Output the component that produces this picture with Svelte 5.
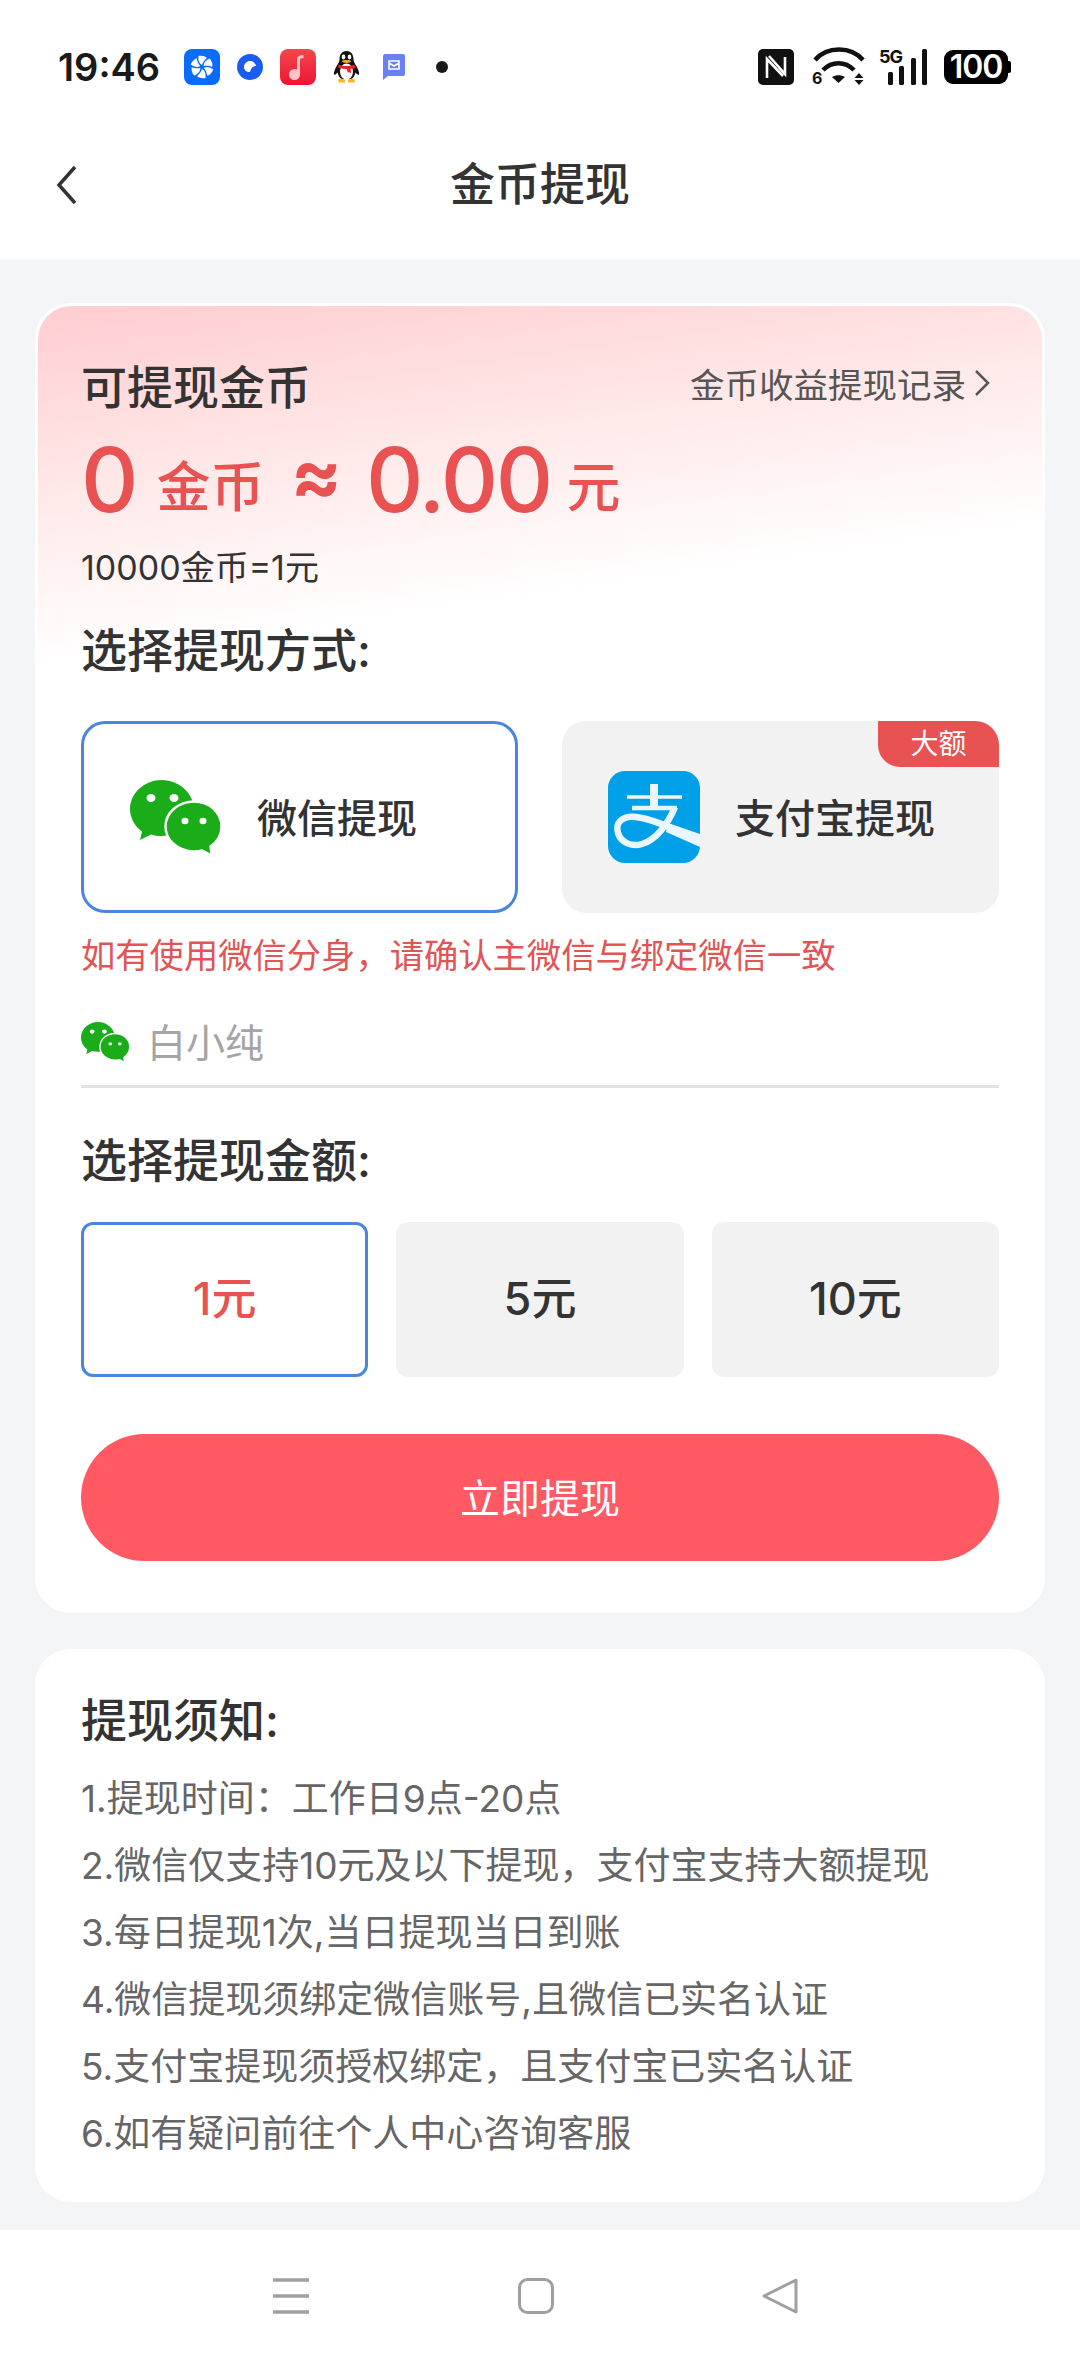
<script lang="ts">
  const FONT_NOTICE = [
    '1.提现时间：工作日9点-20点',
    '2.微信仅支持10元及以下提现，支付宝支持大额提现',
    '3.每日提现1次,当日提现当日到账',
    '4.微信提现须绑定微信账号,且微信已实名认证',
    '5.支付宝提现须授权绑定，且支付宝已实名认证',
    '6.如有疑问前往个人中心咨询客服',
  ];
  const AMOUNTS = ['1元', '5元', '10元'];
  const PETAL = 'M18 16c-3-1.500-4-5-3.500-9 3-.5 6.500 0 8.500 2-2 1.500-4 4-5 7z';
  let selected = $state('1元');
  let method = $state('wechat');
</script>

{#snippet wechat(w, h)}
  <svg width={w} height={h} viewBox="0 0 92 75">
    <path fill="#1aad19" d="M32 0C14.500 0 0 13 0 29c0 9 4.500 17 12 22.500L10 60l11-5.500c3.500 1 7 1.500 11 1.500 17.500 0 32-12 32-27S49.500 0 32 0z" />
    <path fill="#1aad19" stroke="#fff" stroke-width="2.500" d="M64 21.500c-15.500 0-28.500 11-28.500 25s13 25 28.500 25c3 0 5.500-.3 8-1l10 5-1.500-9c7-4.600 11-12 11-20 0-14-12-25-27.500-25z" />
    <ellipse cx="21" cy="18" rx="4.500" ry="4" fill="#fff" />
    <ellipse cx="44" cy="18" rx="4.500" ry="4" fill="#fff" />
    <ellipse cx="55" cy="41" rx="3.500" ry="3.200" fill="#fff" />
    <ellipse cx="73" cy="41" rx="3.500" ry="3.200" fill="#fff" />
  </svg>
{/snippet}

<div class="page">
  <div class="status">
    <span class="time">19:46</span>
    <div class="notifs">
      <span class="slot">
        <svg width="36" height="36" viewBox="0 0 36 36">
          <rect width="36" height="36" rx="8" fill="#0a6cff" />
          <g fill="#fff">
            {#each [0, 60, 120, 180, 240, 300] as deg (deg)}
              <path d={PETAL} transform="rotate({deg} 18 18)" />
            {/each}
          </g>
        </svg>
      </span>
      <span class="slot">
        <svg width="26" height="26" viewBox="0 0 26 26">
          <circle cx="13" cy="13" r="13" fill="#1a5cf0" />
          <path fill="#fff" d="M7 13c0-3.500 2.800-6 6-6 3 0 5.500 2 6 5-2.500 0-5 1.800-5.500 4.500-.2.700-.5 1.500-1 1.500C9.500 18 7 16 7 13z" />
        </svg>
      </span>
      <span class="slot">
        <svg width="36" height="36" viewBox="0 0 36 36">
          <defs>
            <linearGradient id="musicBg" x1="0" y1="0" x2="0" y2="1">
              <stop offset="0" stop-color="#f2484c" />
              <stop offset="1" stop-color="#f01434" />
            </linearGradient>
          </defs>
          <rect width="36" height="36" rx="8" fill="url(#musicBg)" />
          <path fill="none" stroke="#ffc4c8" stroke-width="3" d="M18.500 26V10.500c0-2 1.500-3 5-3" />
          <circle cx="14.500" cy="25.500" r="5.500" fill="#ffc4c8" />
        </svg>
      </span>
      <span class="slot">
        <svg width="27" height="32" viewBox="0 0 27 32">
          <path fill="#111" d="M13.500 0C8.500 0 6.500 4 6.500 8.500c0 2-1 3.500-2.500 6C2 18 .5 21 1 23.500c1 .8 2.500-1 3.500-2 1 3 2 5.500 4 6.500h10c2-1 3-3.500 4-6.500 1 1 2.500 2.800 3.500 2 .5-2.500-1-5.500-3-9-1.500-2.500-2.500-4-2.500-6C20.500 4 18.500 0 13.500 0z" />
          <ellipse cx="13.500" cy="20.500" rx="6.500" ry="8" fill="#fff" />
          <ellipse cx="10.500" cy="6" rx="1.800" ry="2.400" fill="#fff" />
          <ellipse cx="16.500" cy="6" rx="1.800" ry="2.400" fill="#fff" />
          <path fill="#f8a81c" d="M8.500 10c2-1.500 8-1.500 10 0-1.500 2.500-8.500 2.500-10 0z" />
          <path fill="#e8262a" d="M5.500 13.500c4 2 12 2 16 0l1 3c-1.500.8-3 1.200-5 1.500l.5 4-3.500-1-.5-3c-3 0-6-.5-9-1.500z" />
          <path fill="#f8b82c" d="M5 29c2-2 5-1.500 7 0v2.500H5.500zM15 29c2-1.500 5-2 7 0l-.5 2.500H15z" />
        </svg>
      </span>
      <span class="slot">
        <svg width="22" height="26" viewBox="0 0 22 26">
          <path fill="#6a80f5" d="M2 0h18a2 2 0 0 1 2 2v18a2 2 0 0 1-2 2H5l-5 4V2a2 2 0 0 1 2-2z" />
          <path fill="none" stroke="#fff" stroke-width="1.600" d="M6 7h10v8H6zM6 9l5 3 5-3" />
        </svg>
      </span>
      <span class="slot"><i class="dot"></i></span>
    </div>
    <div class="sys">
      <svg width="36" height="36" viewBox="0 0 36 36">
        <rect width="36" height="36" rx="5" fill="#111" />
        <path fill="none" stroke="#fff" stroke-width="2.600" d="M9 29V10l16 17M11 7l16 18V8" />
      </svg>
      <svg class="wifi" width="54" height="44" viewBox="0 -4 54 44">
        <g fill="none" stroke="#111" stroke-width="4.500">
          <path d="M3 11C15-3 39-3 51 11" />
          <path d="M11 21c9-9 22-9 31 0" />
        </g>
        <path fill="#111" d="M20 28c4-2.500 9-2.500 13 0l-6.500 6z" />
        <path fill="#111" d="M47 24l4.500 5h-9zM47 36l-4.500-5h9z" />
        <text x="0" y="35" class="six">6</text>
      </svg>
      <svg class="cell" width="48" height="44" viewBox="0 -4 48 44">
        <text x="0" y="14" class="five">5G</text>
        <rect x="9" y="23" width="5" height="13" rx="1.500" fill="#111" />
        <rect x="20" y="17" width="5" height="19" rx="1.500" fill="#111" />
        <rect x="32" y="9" width="5" height="27" rx="1.500" fill="#111" />
        <rect x="43" y="0" width="5" height="36" rx="1.500" fill="#111" />
      </svg>
      <span class="battery">100</span>
    </div>
  </div>

  <header class="bar">
    <svg class="back" width="22" height="40" viewBox="0 0 22 40">
      <path fill="none" stroke="#333" stroke-width="3.500" d="M19 2L3 20l16 18" />
    </svg>
    <h1>金币提现</h1>
    <span></span>
  </header>

  <main>
    <section class="card hero">
      <div class="top">
        <h2>可提现金币</h2>
        <span class="link">金币收益提现记录
          <svg width="16" height="28" viewBox="0 0 16 28"><path fill="none" stroke="#555" stroke-width="2.500" d="M2 2l12 12L2 26" /></svg>
        </span>
      </div>
      <div class="sum">
        <span class="num">0</span><span class="unit first">金币</span><span class="approx">≈</span><span class="num dec">0.00</span><span class="unit">元</span>
      </div>
      <p class="rate">10000金币=1元</p>
      <h2 class="method-title">选择提现方式:</h2>
      <div class="methods">
        <button class="method" class:on={method === 'wechat'} onclick={() => (method = 'wechat')}>
          {@render wechat(92, 75)}
          <span>微信提现</span>
        </button>
        <button class="method ali" class:on={method === 'alipay'} onclick={() => (method = 'alipay')}>
          <svg width="92" height="92" viewBox="0 0 92 92">
            <rect width="92" height="92" rx="17" fill="#00a0e9" />
            <g fill="none" stroke="#eaf6fd">
              <path stroke-width="3.500" d="M19 26h55" />
              <path stroke-width="4.500" d="M24 37h45" />
              <path stroke-width="8" d="M46 13v24" />
              <path stroke-width="6.500" d="M70 60C56 54 44 48 28 46 14 44 7 52 10 62c3 10 14 14 24 11 14-4 26-20 33-37" />
            </g>
            <path fill="#eaf6fd" d="M60 52l32 11v13L58 61z" />
          </svg>
          <span>支付宝提现</span>
          <em class="tag">大额</em>
        </button>
      </div>
      <p class="warn">如有使用微信分身，请确认主微信与绑定微信一致</p>
      <div class="account">
        {@render wechat(49, 40)}
        <span>白小纯</span>
      </div>
      <h2 class="amount-title">选择提现金额:</h2>
      <div class="amounts">
        {#each AMOUNTS as a (a)}
          <button class="amount" class:on={selected === a} onclick={() => (selected = a)}>{a}</button>
        {/each}
      </div>
      <button class="submit">立即提现</button>
    </section>

    <section class="card notice">
      <h2>提现须知:</h2>
      {#each FONT_NOTICE as line (line)}
        <p>{line}</p>
      {/each}
    </section>
  </main>

  <nav>
    <svg width="36" height="36" viewBox="0 0 36 36">
      <path stroke="#a0a0a0" stroke-width="3.500" d="M0 2h36M0 18h36M0 34h36" />
    </svg>
    <svg width="36" height="36" viewBox="0 0 36 36">
      <rect x="1.500" y="1.500" width="33" height="33" rx="8" fill="none" stroke="#a0a0a0" stroke-width="3" />
    </svg>
    <svg width="36" height="36" viewBox="0 0 36 36">
      <path fill="none" stroke="#a0a0a0" stroke-width="3" stroke-linejoin="round" d="M34 2L2 18l32 16z" />
    </svg>
  </nav>
</div>

<style>
  :global(body) {
    margin: 0;
    background: #f4f5f7;
  }
  .page {
    width: 1080px;
    height: 2362px;
    display: flex;
    flex-direction: column;
    font-family: Inter, 'Noto Sans CJK SC', sans-serif;
    color: #333;
  }
  .status {
    height: 88px;
    padding: 49px 70px 0 58px;
    box-sizing: border-box;
    display: flex;
    align-items: flex-start;
    background: #fff;
  }
  .time {
    width: 120px;
    height: 36px;
    line-height: 36px;
    font-size: 38px;
    font-weight: 600;
    color: #1a1a1a;
  }
  .notifs {
    display: flex;
    align-items: center;
    height: 36px;
    flex: 1;
  }
  .slot {
    width: 48px;
    display: flex;
    justify-content: center;
    align-items: center;
  }
  .dot {
    width: 12px;
    height: 12px;
    border-radius: 50%;
    background: #1a1a1a;
  }
  .sys {
    display: flex;
    align-items: center;
    height: 36px;
  }
  .wifi {
    margin-left: 18px;
  }
  .cell {
    margin-left: 13px;
  }
  .six {
    font-size: 16px;
    font-weight: 700;
    fill: #111;
  }
  .five {
    font-size: 18px;
    font-weight: 700;
    letter-spacing: -1px;
    fill: #111;
  }
  .battery {
    position: relative;
    margin-left: 17px;
    width: 64px;
    height: 34px;
    margin-right: 2px;
    border-radius: 9px;
    background: #000;
    color: #fff;
    font-size: 32px;
    font-weight: 600;
    letter-spacing: -1px;
    line-height: 34px;
    text-align: center;
  }
  .battery::after {
    content: '';
    position: absolute;
    right: -3px;
    top: 11px;
    width: 3px;
    height: 12px;
    border-radius: 0 2px 2px 0;
    background: #000;
  }
  .bar {
    height: 171px;
    padding: 23px 56px 0;
    box-sizing: border-box;
    background: #fff;
    display: grid;
    grid-template-columns: 1fr auto 1fr;
    align-items: center;
  }
  .bar h1 {
    margin: 0;
    font-size: 45px;
    font-weight: 500;
    line-height: 60px;
  }
  main {
    flex: 1;
    padding: 44px 35px 0;
  }
  .card {
    background: #fff;
    border-radius: 36px;
  }
  .hero {
    border: 3px solid #fff;
    padding: 51px 43px 49px;
    background: linear-gradient(172deg, #ffcdd0 0%, #ffe6e6 12%, #fff 25%) padding-box;
    height: 1310px;
    box-sizing: border-box;
  }
  h2 {
    margin: 0;
    font-size: 46px;
    font-weight: 500;
    line-height: 60px;
    color: #333;
  }
  .top {
    display: flex;
    justify-content: space-between;
    align-items: center;
  }
  .link {
    font-size: 34.500px;
    color: #555;
    display: flex;
    align-items: center;
    gap: 8px;
    margin: 0 9px 9px 0;
  }
  .sum {
    margin-top: 13px;
    height: 100px;
    display: flex;
    align-items: baseline;
    color: #e85252;
    line-height: 100px;
  }
  .num {
    font-size: 89px;
    font-weight: 500;
  }
  .dec {
    letter-spacing: -2.500px;
  }
  .unit {
    font-size: 54px;
    font-weight: 500;
    margin-left: 16px;
    transform: translateY(-5px);
  }
  .unit.first {
    margin-left: 18px;
  }
  .approx {
    font-size: 76px;
    font-weight: 700;
    margin: 0 24px 0 26px;
    transform: translateY(-10px);
  }
  .rate {
    margin: 16px 0 0;
    font-size: 34px;
    line-height: 44px;
    color: #333;
  }
  .method-title {
    margin-top: 30px;
  }
  .methods {
    margin-top: 41px;
    display: grid;
    grid-template-columns: 437px 437px;
    gap: 44px;
  }
  button {
    font-family: inherit;
    color: inherit;
    border: 3px solid transparent;
    background: #f2f2f2;
    padding: 0;
    box-sizing: border-box;
  }
  .method {
    position: relative;
    height: 192px;
    border-radius: 24px;
    display: flex;
    align-items: center;
    padding-left: 46px;
    font-size: 40px;
    font-weight: 500;
    overflow: hidden;
  }
  .method span {
    margin-left: 35px;
    padding-bottom: 3px;
  }
  .method.ali {
    padding-left: 46px;
    border: 0;
  }
  .on {
    background: #fff;
    border-color: #4a86e0;
  }
  .tag {
    position: absolute;
    top: 0;
    right: 0;
    width: 121px;
    height: 46px;
    line-height: 46px;
    text-align: center;
    background: #e85252;
    color: #fff;
    font-size: 28px;
    font-style: normal;
    font-weight: 400;
    border-bottom-left-radius: 22px;
  }
  .warn {
    margin: 21px 0 0;
    font-size: 34.300px;
    line-height: 44px;
    color: #e05555;
  }
  .account {
    margin-top: 32px;
    height: 64px;
    padding-bottom: 11px;
    border-bottom: 3px solid #e2e2e2;
    display: flex;
    align-items: center;
    gap: 17px;
    font-size: 39px;
    color: #a5a5a5;
  }
  .account span {
    padding-bottom: 5px;
  }
  .amount-title {
    margin-top: 42px;
  }
  .amounts {
    margin-top: 32px;
    display: grid;
    grid-template-columns: repeat(3, 1fr);
    gap: 28px;
  }
  .amount {
    height: 155px;
    padding-bottom: 8px;
    border-radius: 12px;
    font-size: 45px;
    font-weight: 500;
  }
  .amount.on {
    color: #e85252;
  }
  .submit {
    margin-top: 57px;
    width: 100%;
    height: 127px;
    padding-bottom: 4px;
    border: 0;
    border-radius: 64px;
    background: #ff5a64;
    color: #fff;
    font-size: 40px;
  }
  .notice {
    margin-top: 36px;
    padding: 41px 46px 35px;
    height: 553px;
    box-sizing: border-box;
  }
  .notice h2 {
    margin-bottom: 15px;
  }
  .notice p {
    margin: 0;
    font-size: 37px;
    line-height: 67px;
    color: #666;
  }
  nav {
    height: 132px;
    background: #fff;
    box-sizing: border-box;
    padding: 48px 282px 48px 273px;
    display: flex;
    justify-content: space-between;
    align-items: flex-start;
  }
</style>
